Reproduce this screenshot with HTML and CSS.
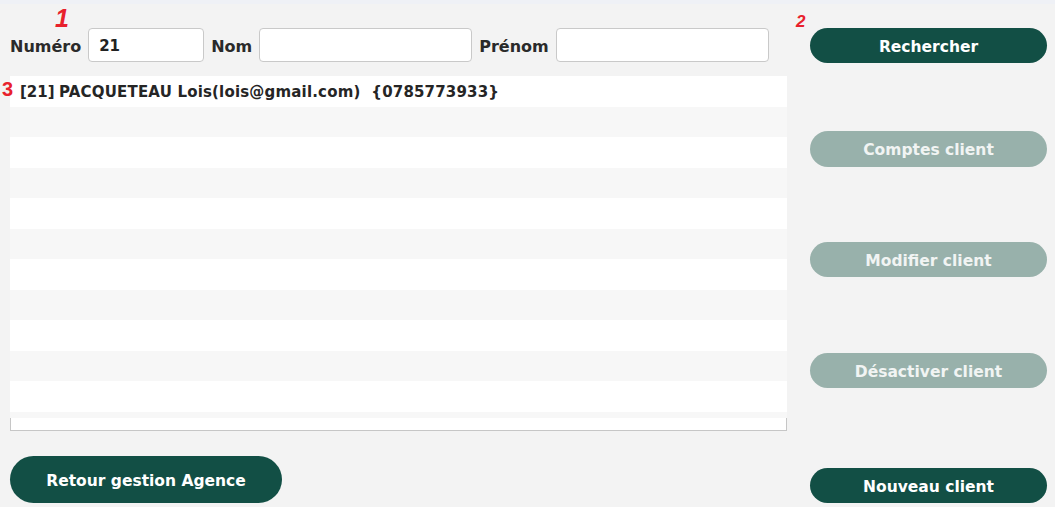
FILE: index.html
```html
<!DOCTYPE html>
<html lang="fr">
<head>
<meta charset="utf-8">
<link rel="stylesheet" href="styles.css">
</head>
<body>
<div class="page">
  <div class="left">
    <div class="search">
      <label class="lbl">Numéro</label>
      <input class="field f-num" type="text" value="21">
      <label class="lbl">Nom</label>
      <input class="field f-wide" type="text" value="">
      <label class="lbl">Prénom</label>
      <input class="field f-wide" type="text" value="">
    </div>
    <div class="list">
      <div class="row"><span class="id">[21]</span><span class="txt">PACQUETEAU Lois(lois@gmail.com)&nbsp; {0785773933}</span></div>
      <div class="row"></div>
      <div class="row"></div>
      <div class="row"></div>
      <div class="row"></div>
      <div class="row"></div>
      <div class="row"></div>
      <div class="row"></div>
      <div class="row"></div>
      <div class="row"></div>
      <div class="row"></div>
      <div class="strip"></div>
      <div class="tail"></div>
    </div>
    <button class="btn btn-back">Retour gestion Agence</button>
  </div>
  <div class="right">
    <button class="btn btn-side b1">Rechercher</button>
    <button class="btn btn-side off b2">Comptes client</button>
    <button class="btn btn-side off b3">Modifier client</button>
    <button class="btn btn-side off b4">Désactiver client</button>
    <button class="btn btn-side b5">Nouveau client</button>
  </div>
  <span class="mark m1">1</span>
  <span class="mark m2">2</span>
  <span class="mark m3">3</span>
</div>
</body>
</html>
```
FILE: styles.css
```css
html, body {
  margin: 0;
  padding: 0;
}
body {
  background: #f3f3f3;
  font-family: "DejaVu Sans", "Liberation Sans", sans-serif;
  color: #262626;
}
.page {
  position: relative;
  display: flex;
  border-top: 4px solid #eff1f6;
  height: 503px;
  box-sizing: border-box;
}
.left {
  width: 777px;
  margin-left: 10px;
  padding-top: 24px;
  display: flex;
  flex-direction: column;
}
.search {
  display: flex;
  align-items: center;
  gap: 7px;
  height: 34px;
}
.lbl {
  font-weight: bold;
  font-size: 16px;
  color: #2a2a2a;
  padding-top: 2px;
}
.field {
  height: 34px;
  box-sizing: border-box;
  border: 1px solid #c9c9c9;
  border-radius: 4px;
  background: #fff;
  padding: 2px 10px 0;
  font-family: inherit;
  font-weight: bold;
  font-size: 15px;
  color: #222;
  outline: none;
}
.f-num { width: 116px; }
.f-wide { width: 213px; }
.list {
  margin-top: 14px;
  width: 777px;
}
.row {
  height: 30.5px;
  overflow: hidden;
  background: #fff;
  padding-left: 10px;
  font-weight: bold;
  font-size: 15px;
  line-height: 33px;
  color: #252525;
  white-space: pre;
}
.id {
  display: inline-block;
  width: 39px;
}
.txt {
  letter-spacing: 0.18px;
}
.row:nth-child(even) {
  background: #f7f7f7;
}
.strip {
  height: 6px;
  background: #f7f7f7;
}
.tail {
  height: 12px;
  background: #fff;
  border: 1px solid #c6c6c6;
  border-top: none;
}
.btn {
  border: none;
  border-radius: 999px;
  font-family: inherit;
  font-weight: bold;
  color: #fff;
  background: #124f45;
  padding: 2px 0 0;
  cursor: pointer;
}
.btn-back {
  margin-top: 25px;
  width: 272px;
  height: 48px;
  font-size: 15.5px;
  padding-top: 4px;
}
.right {
  margin-left: 23px;
  width: 237px;
  display: flex;
  flex-direction: column;
  padding-top: 24px;
}
.btn-side {
  width: 237px;
  height: 35px;
  font-size: 15.5px;
}
.off {
  background: #98b1ab;
  color: #f1f4f3;
}
.b2 { margin-top: 68px; height: 36px; }
.b3 { margin-top: 75px; }
.b4 { margin-top: 76px; }
.b5 { margin-top: 80px; }
.mark {
  position: absolute;
  color: #e8212c;
  font-family: "Liberation Sans", sans-serif;
  font-weight: bold;
  line-height: 1;
}
.m1 { left: 55px; top: 2px; font-size: 25px; font-style: italic; }
.m2 { left: 796px; top: 9px; font-size: 17px; font-style: italic; }
.m3 { left: 2px; top: 75px; font-size: 20px; }
```
